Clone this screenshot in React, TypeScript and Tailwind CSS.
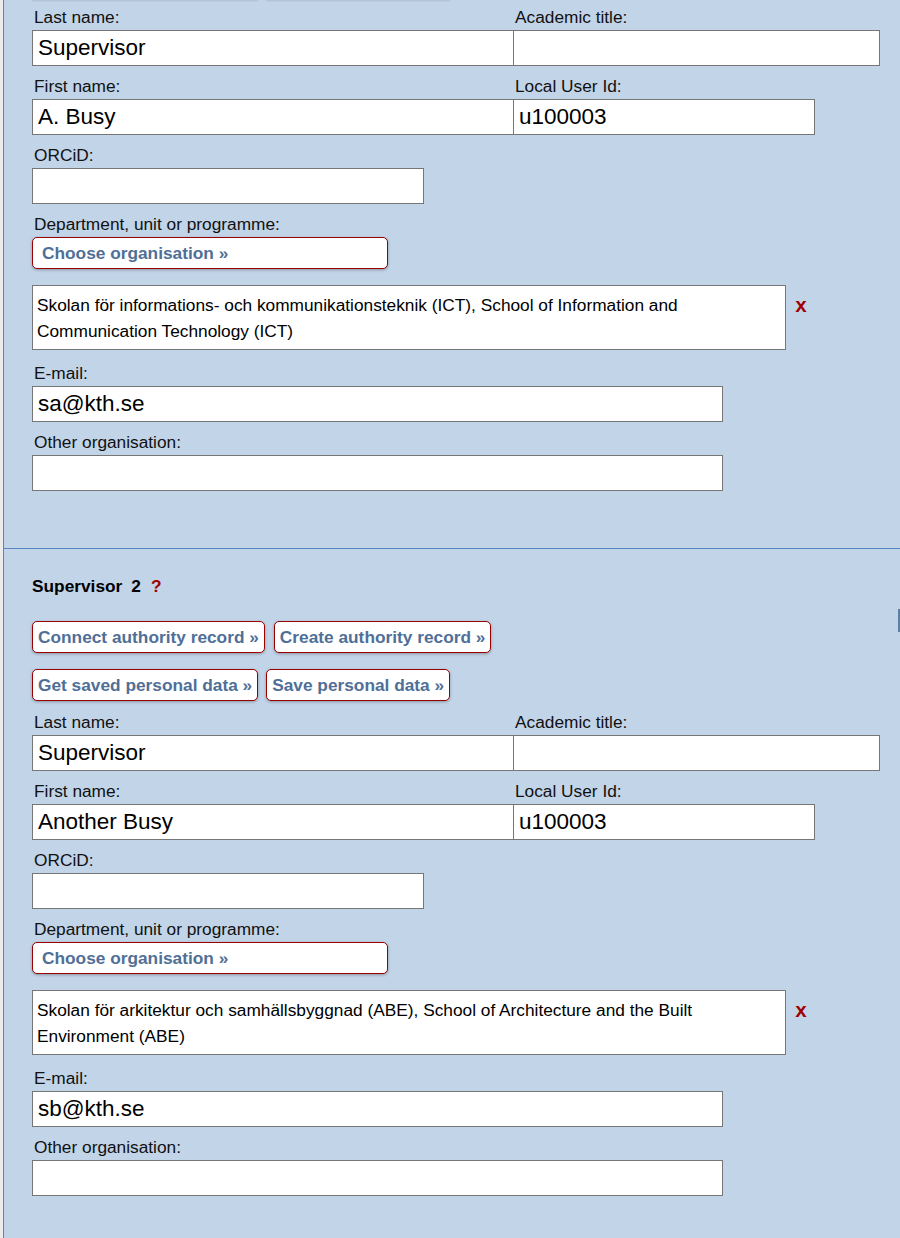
import React from 'react'

type Person = {
  n: number
  lastName: string
  firstName: string
  userId: string
  org: React.ReactNode
  email: string
}

const people: Person[] = [
  {
    n: 1,
    lastName: 'Supervisor',
    firstName: 'A. Busy',
    userId: 'u100003',
    org: (
      <>
        Skolan för informations- och kommunikationsteknik (ICT), School of Information and
        <br />
        Communication Technology (ICT)
      </>
    ),
    email: 'sa@kth.se',
  },
  {
    n: 2,
    lastName: 'Supervisor',
    firstName: 'Another Busy',
    userId: 'u100003',
    org: (
      <>
        Skolan för arkitektur och samhällsbyggnad (ABE), School of Architecture and the Built
        <br />
        Environment (ABE)
      </>
    ),
    email: 'sb@kth.se',
  },
]

function Label({ children, className = 'mt-[11px]' }: { children: React.ReactNode; className?: string }) {
  return (
    <div className={`mb-[4px] pl-[2px] text-[17.3px] leading-[18px] text-[#111] ${className}`}>{children}</div>
  )
}

function Field({ value, className }: { value: string; className: string }) {
  return (
    <input
      readOnly
      defaultValue={value}
      className={`block h-[36px] border border-[#767676] bg-white px-[5px] text-[22.5px] text-black outline-none ${className}`}
    />
  )
}

function LinkButton({ children, className = '' }: { children: React.ReactNode; className?: string }) {
  return (
    <button
      className={`h-[32px] rounded-[5px] border border-[#990000] bg-white px-[5px] text-left text-[17.3px] font-bold leading-[20px] text-[#4f6f98] shadow-[0_1px_3px_rgba(0,0,0,0.3)] ${className}`}
    >
      {children}
    </button>
  )
}

function Section({ p, scrolled }: { p: Person; scrolled?: boolean }) {
  return (
    <div className={`border-b border-[#5b87c1] pb-[57px] pl-[28px] ${scrolled ? '' : 'pt-[28px]'}`}>
      {scrolled ? (
        // only the shadows of the buttons above the fold are left
        <div className="-mb-[5px] flex h-[2px] gap-[8px]">
          <div className="h-[2px] w-[226px] bg-gradient-to-b from-[#aebdd1] to-[#c2d4e8]" />
          <div className="h-[2px] w-[184px] bg-gradient-to-b from-[#aebdd1] to-[#c2d4e8]" />
        </div>
      ) : (
        <>
          <div className="flex text-[17.3px] font-bold leading-[18px] text-black">
            <span>Supervisor</span>
            <span className="ml-[9px]">{p.n}</span>
            <span className="ml-[10px] text-[#a00000]">?</span>
          </div>

          <div className="mt-[26px] flex gap-[9px]">
            <LinkButton>Connect authority record »</LinkButton>
            <LinkButton>Create authority record »</LinkButton>
          </div>
          <div className="mt-[16px] mb-[1px] flex gap-[8px]">
            <LinkButton>Get saved personal data »</LinkButton>
            <LinkButton>Save personal data »</LinkButton>
          </div>
        </>
      )}

      {/* names */}
      <div className="flex">
        <div className="w-[481px]">
          <Label>Last name:</Label>
          <Field value={p.lastName} className="w-[482px]" />
        </div>
        <div className="relative w-[367px]">
          <Label>Academic title:</Label>
          <Field value="" className="w-[367px]" />
        </div>
      </div>
      <div className="flex">
        <div className="w-[481px]">
          <Label>First name:</Label>
          <Field value={p.firstName} className="w-[482px]" />
        </div>
        <div className="relative w-[302px]">
          <Label>Local User Id:</Label>
          <Field value={p.userId} className="w-[302px]" />
        </div>
      </div>

      <Label>ORCiD:</Label>
      <Field value="" className="w-[392px]" />

      <Label>Department, unit or programme:</Label>
      <LinkButton className="w-[356px] pl-[9px]">Choose organisation »</LinkButton>

      <div className="mt-[16px] flex items-start">
        <div className="w-[754px] border border-[#767676] bg-white px-[4px] pt-[6px] pb-[5px] text-[17.3px] leading-[26px] text-black">
          {p.org}
        </div>
        <span className="ml-[9px] mt-[12px] font-['Liberation_Mono',monospace] text-[20px] font-bold leading-[20px] text-[#a00000]">
          x
        </span>
      </div>

      <Label className="mt-[14px]">E-mail:</Label>
      <Field value={p.email} className="w-[691px]" />

      <Label>Other organisation:</Label>
      <Field value="" className="w-[691px]" />
    </div>
  )
}

export default function App() {
  return (
    <div className="relative flex h-[1238px] overflow-hidden font-['Liberation_Sans',Arial,sans-serif]">
      <div className="box-content w-[3px] shrink-0 border-r border-[#7f8076] bg-[#ececec]" />
      <div className="flex-1 bg-[#c2d4e8]">
        {people.map((p, i) => (
          <Section key={p.n} p={p} scrolled={i === 0} />
        ))}
      </div>
      <div className="absolute right-0 top-[609px] h-[23px] w-[2px] bg-[#5b7fa5]" />
    </div>
  )
}
